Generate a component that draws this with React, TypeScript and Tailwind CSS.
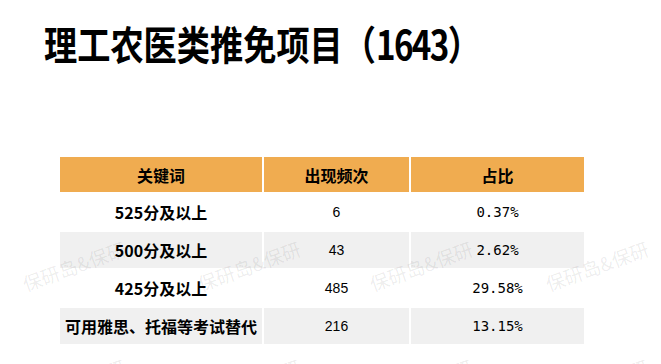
const rows = [
  { key: "525分及以上", count: "6", ratio: "0.37%", shaded: false },
  { key: "500分及以上", count: "43", ratio: "2.62%", shaded: true },
  { key: "425分及以上", count: "485", ratio: "29.58%", shaded: false },
  { key: "可用雅思、托福等考试替代", count: "216", ratio: "13.15%", shaded: true },
];

const cjk = "font-['Noto_Sans_CJK_SC',sans-serif]";

function Watermark({ className }: { className: string }) {
  return (
    <span
      className={`absolute w-[108px] h-[24px] -rotate-[20deg] text-[19px] leading-[24px] whitespace-nowrap text-black/[0.08] pointer-events-none ${cjk} ${className}`}
    >
      保研岛&amp;保研
    </span>
  );
}

export default function App() {
  return (
    <div className="relative w-[661px] h-[364px] overflow-hidden bg-white">
      {/* Title */}
      <div className="pt-[18px] pl-[44px]">
        <h1
          className={`inline-block origin-left scale-x-[0.83] text-[40px] leading-[50px] font-bold text-black whitespace-nowrap ${cjk}`}
        >
          理工农医类推免项目（<span className="tracking-[-2px]">1643</span>）
        </h1>
      </div>

      {/* Table */}
      <div className="mt-[89px] ml-[60px] grid grid-cols-[202px_145px_173px] gap-[2px]">
        <div className={`h-[35px] flex items-center justify-center bg-[#f0ac50] text-[16px] font-bold text-black ${cjk}`}>
          关键词
        </div>
        <div className={`h-[35px] flex items-center justify-center bg-[#f0ac50] text-[16px] font-bold text-black ${cjk}`}>
          出现频次
        </div>
        <div className={`h-[35px] flex items-center justify-center bg-[#f0ac50] text-[16px] font-bold text-black ${cjk}`}>
          占比
        </div>
        {rows.map((r) => (
          <div key={r.key} className="contents">
            <div
              className={`h-[36px] flex items-center justify-center text-[16px] font-bold text-black whitespace-nowrap ${cjk} ${
                r.shaded ? "bg-[#f0f0f0]" : "bg-white"
              }`}
            >
              {r.key}
            </div>
            <div
              className={`h-[36px] flex items-center justify-center text-[14px] text-black font-['Liberation_Sans',sans-serif] ${
                r.shaded ? "bg-[#f0f0f0]" : "bg-white"
              }`}
            >
              {r.count}
            </div>
            <div
              className={`h-[36px] flex items-center justify-center text-[14px] text-black font-['DejaVu_Sans_Mono',monospace] ${
                r.shaded ? "bg-[#f0f0f0]" : "bg-white"
              }`}
            >
              {r.ratio}
            </div>
          </div>
        ))}
      </div>

      {/* Watermarks */}
      <Watermark className="left-[20px] top-[254px]" />
      <Watermark className="left-[195px] top-[254px]" />
      <Watermark className="left-[367px] top-[254px]" />
      <Watermark className="left-[543px] top-[254px]" />
      <Watermark className="left-[20px] top-[372px]" />
      <Watermark className="left-[195px] top-[372px]" />
      <Watermark className="left-[367px] top-[372px]" />
      <Watermark className="left-[543px] top-[372px]" />
    </div>
  );
}
